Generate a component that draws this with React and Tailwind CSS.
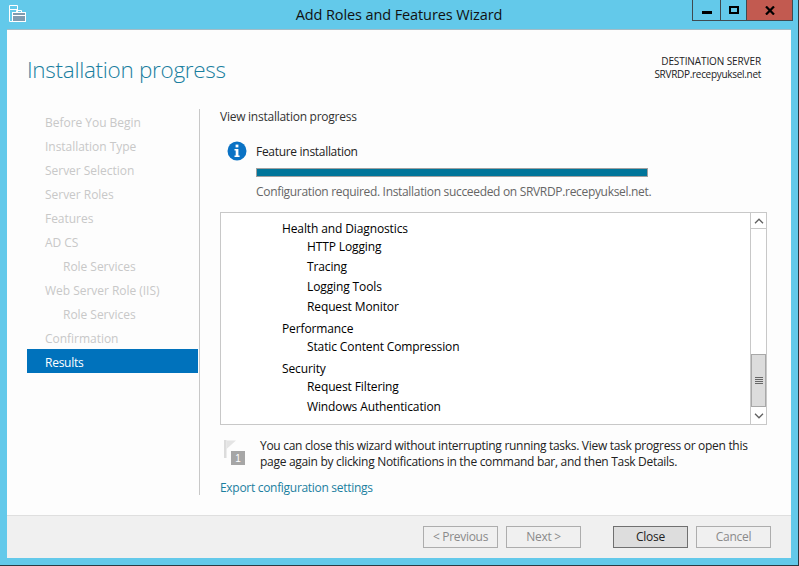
const font = { fontFamily: '"Open Sans", sans-serif' };

const steps = [
  { label: "Before You Begin" },
  { label: "Installation Type" },
  { label: "Server Selection" },
  { label: "Server Roles" },
  { label: "Features" },
  { label: "AD CS" },
  { label: "Role Services", sub: true },
  { label: "Web Server Role (IIS)" },
  { label: "Role Services", sub: true },
  { label: "Confirmation" },
  { label: "Results", active: true },
];

const ServerIcon = () => (
  <svg width="17" height="17" viewBox="0 0 17 17" className="block">
    <path d="M0.5 0.5H8.5V16.5H0.5Z" fill="#63c9ea" stroke="#fff" />
    <path d="M1 4.5H8" stroke="#fff" />
    <rect x="3.5" y="7.5" width="13" height="9" fill="#7f9bb0" stroke="#fff" />
    <path d="M7.5 7V5.5H12.5V7" fill="none" stroke="#fff" />
    <path d="M4 10.5H16" stroke="#fff" />
  </svg>
);

const InfoIcon = () => (
  <svg width="20" height="20" viewBox="0 0 20 20" className="block">
    <circle cx="10" cy="10" r="9.5" fill="#0a72c4" />
    <rect x="8.6" y="3.6" width="2.8" height="2.8" fill="#fff" />
    <path d="M7.5 8H11.4V14.6H12.6V16H7.5V14.6H8.7V9.4H7.5Z" fill="#fff" />
  </svg>
);

const FlagIcon = () => (
  <svg width="24" height="26" viewBox="0 0 24 26" className="block">
    <rect x="0" y="0" width="2.5" height="18" fill="#dcdcdc" />
    <path d="M2.5 0.5L12 0.5L2.5 9Z" fill="#e4e4e4" />
    <rect x="7" y="11" width="14" height="14" fill="#a6a6a6" />
    <text x="14" y="22" textAnchor="middle" fontSize="10" fill="#fff" fontFamily="Liberation Sans">1</text>
  </svg>
);

const Chevron = ({ up }) => (
  <svg width="10" height="6" viewBox="0 0 10 6" className="block">
    <path d={up ? "M1 5.2L5 1.2L9 5.2" : "M1 0.8L5 4.8L9 0.8"} fill="none" stroke="#606060" strokeWidth="1.3" />
  </svg>
);

const Group = ({ title, items }) => (
  <div className="tracking-[-0.12px] text-black">
    <div className="h-[18px] pl-[61px] font-medium leading-[18px]">{title}</div>
    {items.map((it) => (
      <div key={it} className="h-5 pl-[86px] font-medium leading-[18px]">{it}</div>
    ))}
  </div>
);

const Button = ({ children, primary }) => (
  <button
    className={
      primary
        ? "h-[22px] w-[75px] border border-[#707070] bg-[#dddddd] text-[12px] leading-5 text-[#222]"
        : "h-[22px] w-[75px] border border-[#adadad] bg-[#f0f0f0] text-[12px] leading-5 text-[#8a8a8a]"
    }
  >
    {children}
  </button>
);

export default function App() {
  return (
    <div style={font} className="flex h-[566px] w-[799px] flex-col overflow-hidden border-r border-b border-[#2b3a42] bg-[#63c9ea] text-[12px] tracking-[-0.3px]">
      {/* title bar */}
      <div className="flex h-[29px] shrink-0">
        <div className="w-[9px]" />
        <div className="pt-[5px]"><ServerIcon /></div>
        <div className="flex-1 pl-[80px] pt-[6px] text-center text-[14.5px] leading-[18px] tracking-[-0.1px] text-[#111]">
          Add Roles and Features Wizard
        </div>
        <div className="mr-[5px] flex h-[21px] border-x border-b border-[#3f4a50]">
          <div className="flex w-[28px] items-center justify-center border-r border-[#3f4a50] pt-[4px]">
            <div className="h-[3px] w-[10px] bg-black" />
          </div>
          <div className="flex w-[26px] items-center justify-center border-r border-[#3f4a50]">
            <div className="h-[8px] w-[10px] border-2 border-black" />
          </div>
          <div className="flex w-[45px] items-center justify-center bg-[#c25a50]">
            <svg width="10" height="9" viewBox="0 0 10 9" className="block">
              <path d="M1 0.5L9 8.5M9 0.5L1 8.5" stroke="#000" strokeWidth="2.2" />
            </svg>
          </div>
        </div>
      </div>

      {/* client area */}
      <div className="mx-[7px] mb-[7px] flex min-h-0 flex-1 flex-col border-t border-[#a4bcc6] bg-[#fdfdfd]">
        <div className="flex h-[79px] shrink-0 justify-between pl-5 pr-[30px]">
          <div className="pt-[24px] text-[22.5px] font-light leading-[32px] tracking-[-0.3px] text-[#1a7f9f]">Installation progress</div>
          <div className="pt-[25px] text-right text-[10px] leading-[13px] text-[#222]">
            <div className="tracking-[-0.1px]">DESTINATION SERVER</div>
            <div className="tracking-[-0.3px]">SRVRDP.recepyuksel.net</div>
          </div>
        </div>

        <div className="flex min-h-0 flex-1 pl-5">
          {/* steps */}
          <div className="h-[386px] w-[173px] shrink-0 border-r border-[#c8c8c8] pt-0">
            <div className="w-[171px]">
              {steps.map((s, i) => (
                <div
                  key={i}
                  className={
                    "h-6 leading-[28px] " +
                    (s.sub ? "pl-9 " : "pl-[18px] ") +
                    (s.active ? "bg-[#0072bc] tracking-[-0.25px] text-white" : "tracking-[-0.03px] text-[#c8c8c8]")
                  }
                >
                  {s.label}
                </div>
              ))}
            </div>
          </div>

          {/* main column */}
          <div className="ml-5 w-[547px]">
            <div className="h-4 leading-4 tracking-[-0.25px] text-[#333]">View installation progress</div>
            <div className="mt-[16px] flex">
              <div className="ml-[7px] w-[29px] shrink-0"><InfoIcon /></div>
              <div className="flex-1">
                <div className="h-5 leading-[22px] text-[#222]">Feature installation</div>
                <div className="mt-[7px] h-[9px] w-[392px] border border-[#a0a0a0] bg-[#00759a]" />
                <div className="mt-[5px] h-5 leading-5 tracking-[-0.32px] text-[#666]">
                  Configuration required. Installation succeeded on SRVRDP.recepyuksel.net.
                </div>
              </div>
            </div>

            {/* feature list */}
            <div className="mt-[10px] flex h-[213px] border border-[#c8c8c8] bg-white">
              <div className="flex-1 overflow-hidden pt-[7px]">
                <Group title="Health and Diagnostics" items={["HTTP Logging", "Tracing", "Logging Tools", "Request Monitor"]} />
                <div className="mt-[2px]"><Group title="Performance" items={["Static Content Compression"]} /></div>
                <div className="mt-[2px]"><Group title="Security" items={["Request Filtering", "Windows Authentication"]} /></div>
              </div>
              <div className="flex w-4 shrink-0 flex-col border-l border-[#c8c8c8]">
                <div className="flex h-[16px] items-center justify-center border-b border-[#c8c8c8]"><Chevron up /></div>
                <div className="flex-1" />
                <div className="flex h-[53px] flex-col items-center justify-center gap-px border border-[#a8a8a8] bg-[#dcdcdc]">
                  <div className="h-px w-2 bg-[#666]" />
                  <div className="h-px w-2 bg-[#666]" />
                  <div className="h-px w-2 bg-[#666]" />
                  <div className="h-px w-2 bg-[#666]" />
                </div>
                <div className="flex h-[17px] items-center justify-center"><Chevron /></div>
              </div>
            </div>

            {/* note */}
            <div className="mt-[13px] flex">
              <div className="ml-[4px] w-[36px] shrink-0 pt-[2px]"><FlagIcon /></div>
              <div className="leading-[16px] text-[#222]">
                You can close this wizard without interrupting running tasks. View task progress or open this
                <br />
                page again by clicking Notifications in the command bar, and then Task Details.
              </div>
            </div>
            <div className="mt-[10px] leading-4 text-[#1b7f9f]">Export configuration settings</div>
          </div>
        </div>

        {/* footer */}
        <div className="flex h-[43px] shrink-0 items-center justify-end gap-2 border-t border-[#dfdfdf] bg-[#f0f0f0] pr-5">
          <Button>&lt; Previous</Button>
          <Button>Next &gt;</Button>
          <div className="w-4" />
          <Button primary>Close</Button>
          <Button>Cancel</Button>
        </div>
      </div>
    </div>
  );
}
